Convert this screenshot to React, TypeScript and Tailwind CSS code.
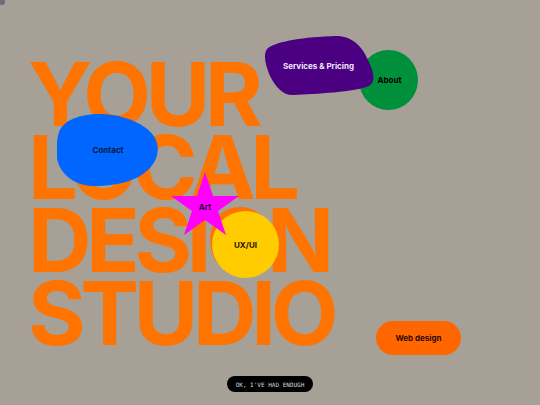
import React from "react";

const shapeText = "absolute inset-0 flex items-center justify-center text-[8px] font-bold";

const purpleBlob =
  "M4 12 C14 5 40 1 72 0 C88 0 98 10 104 24 C110 36 112 46 105 50 C92 56 50 58 30 59 C20 60 12 52 6 40 C2 30 -2 18 4 12 Z";

const App: React.FC = () => {
  return (
    <div
      className="relative w-full h-[405px] overflow-hidden bg-[#a6a096]"
      style={{ fontFamily: "Inter, 'Liberation Sans', sans-serif" }}
    >
      {/* dot */}
      <div className="absolute left-[-1px] top-[-1px] w-[6px] h-[6px] rounded-full bg-[#6d6c7a]" />

      {/* Heading */}
      <h1 className="pl-[28px] pt-[58px] text-[88px] leading-[73px] font-bold tracking-[-0.06em] text-[#ff7300]">
        <div>YOUR</div>
        <div>LOCAL</div>
        <div>DESIGN</div>
        <div>STUDIO</div>
      </h1>

      {/* About */}
      <div className="absolute left-[359px] top-[50px] w-[59px] h-[60px]">
        <svg viewBox="0 0 59 60" className="absolute inset-0 w-full h-full">
          <ellipse cx="29.5" cy="30" rx="29.5" ry="30" fill="#008f3a" />
        </svg>
        <span className={`${shapeText} text-black pl-[2px]`}>About</span>
      </div>

      {/* Services & Pricing (over About) */}
      <div className="absolute left-[264px] top-[36px] w-[111px] h-[60px]">
        <svg viewBox="0 0 111 60" className="absolute inset-0 w-full h-full">
          <path d={purpleBlob} fill="#4b0082" />
        </svg>
        <span className={`${shapeText} text-[#f2e6ff] pr-[2px]`}>Services &amp; Pricing</span>
      </div>

      {/* Contact */}
      <div className="absolute left-[57px] top-[114px] w-[102px] h-[72px]">
        <svg viewBox="0 0 102 72" className="absolute inset-0 w-full h-full">
          <path
            d="M2 18 C6 6 24 0 42 0 C66 0 90 10 98 24 C104 36 100 50 86 60 C72 70 52 72 36 72 C16 72 2 58 0 44 C-1 34 0 24 2 18 Z"
            fill="#0066ff"
          />
        </svg>
        <span className={`${shapeText} text-[#0a1a40]`}>Contact</span>
      </div>

      {/* UX/UI */}
      <div className="absolute left-[212px] top-[211px] w-[67px] h-[67px]">
        <svg viewBox="0 0 67 67" className="absolute inset-0 w-full h-full">
          <circle cx="33.5" cy="33.5" r="33.5" fill="#ffcc00" />
        </svg>
        <span className={`${shapeText} text-[#1a1400]`}>UX/UI</span>
      </div>

      {/* Art star */}
      <div className="absolute left-[171px] top-[172px] w-[68px] h-[64px]">
        <svg viewBox="0 0 68 64" className="absolute inset-0 w-full h-full">
          <polygon
            points="34,0 42,24 68,24 47,39 55,63 34,48 13,63 21,39 0,24 26,24"
            fill="#ff00ff"
          />
        </svg>
        <span className={`${shapeText} text-[#2a0030] pt-[6px]`}>Art</span>
      </div>

      {/* Web design */}
      <div className="absolute left-[376px] top-[321px] w-[85px] h-[34px] rounded-full bg-[#ff6600] flex items-center justify-center text-[8px] font-bold text-[#2a0a00]">
        Web design
      </div>

      {/* Bottom button */}
      <div className="absolute bottom-[13px] left-0 right-0 flex justify-center">
        <button
          className="h-[16px] w-[86px] rounded-full bg-black text-[6px] text-[#d8d8d8] flex items-center justify-center"
          style={{ fontFamily: "'DejaVu Sans Mono', 'Liberation Mono', monospace" }}
        >
          OK, I'VE HAD ENOUGH
        </button>
      </div>
    </div>
  );
};

export default App;
